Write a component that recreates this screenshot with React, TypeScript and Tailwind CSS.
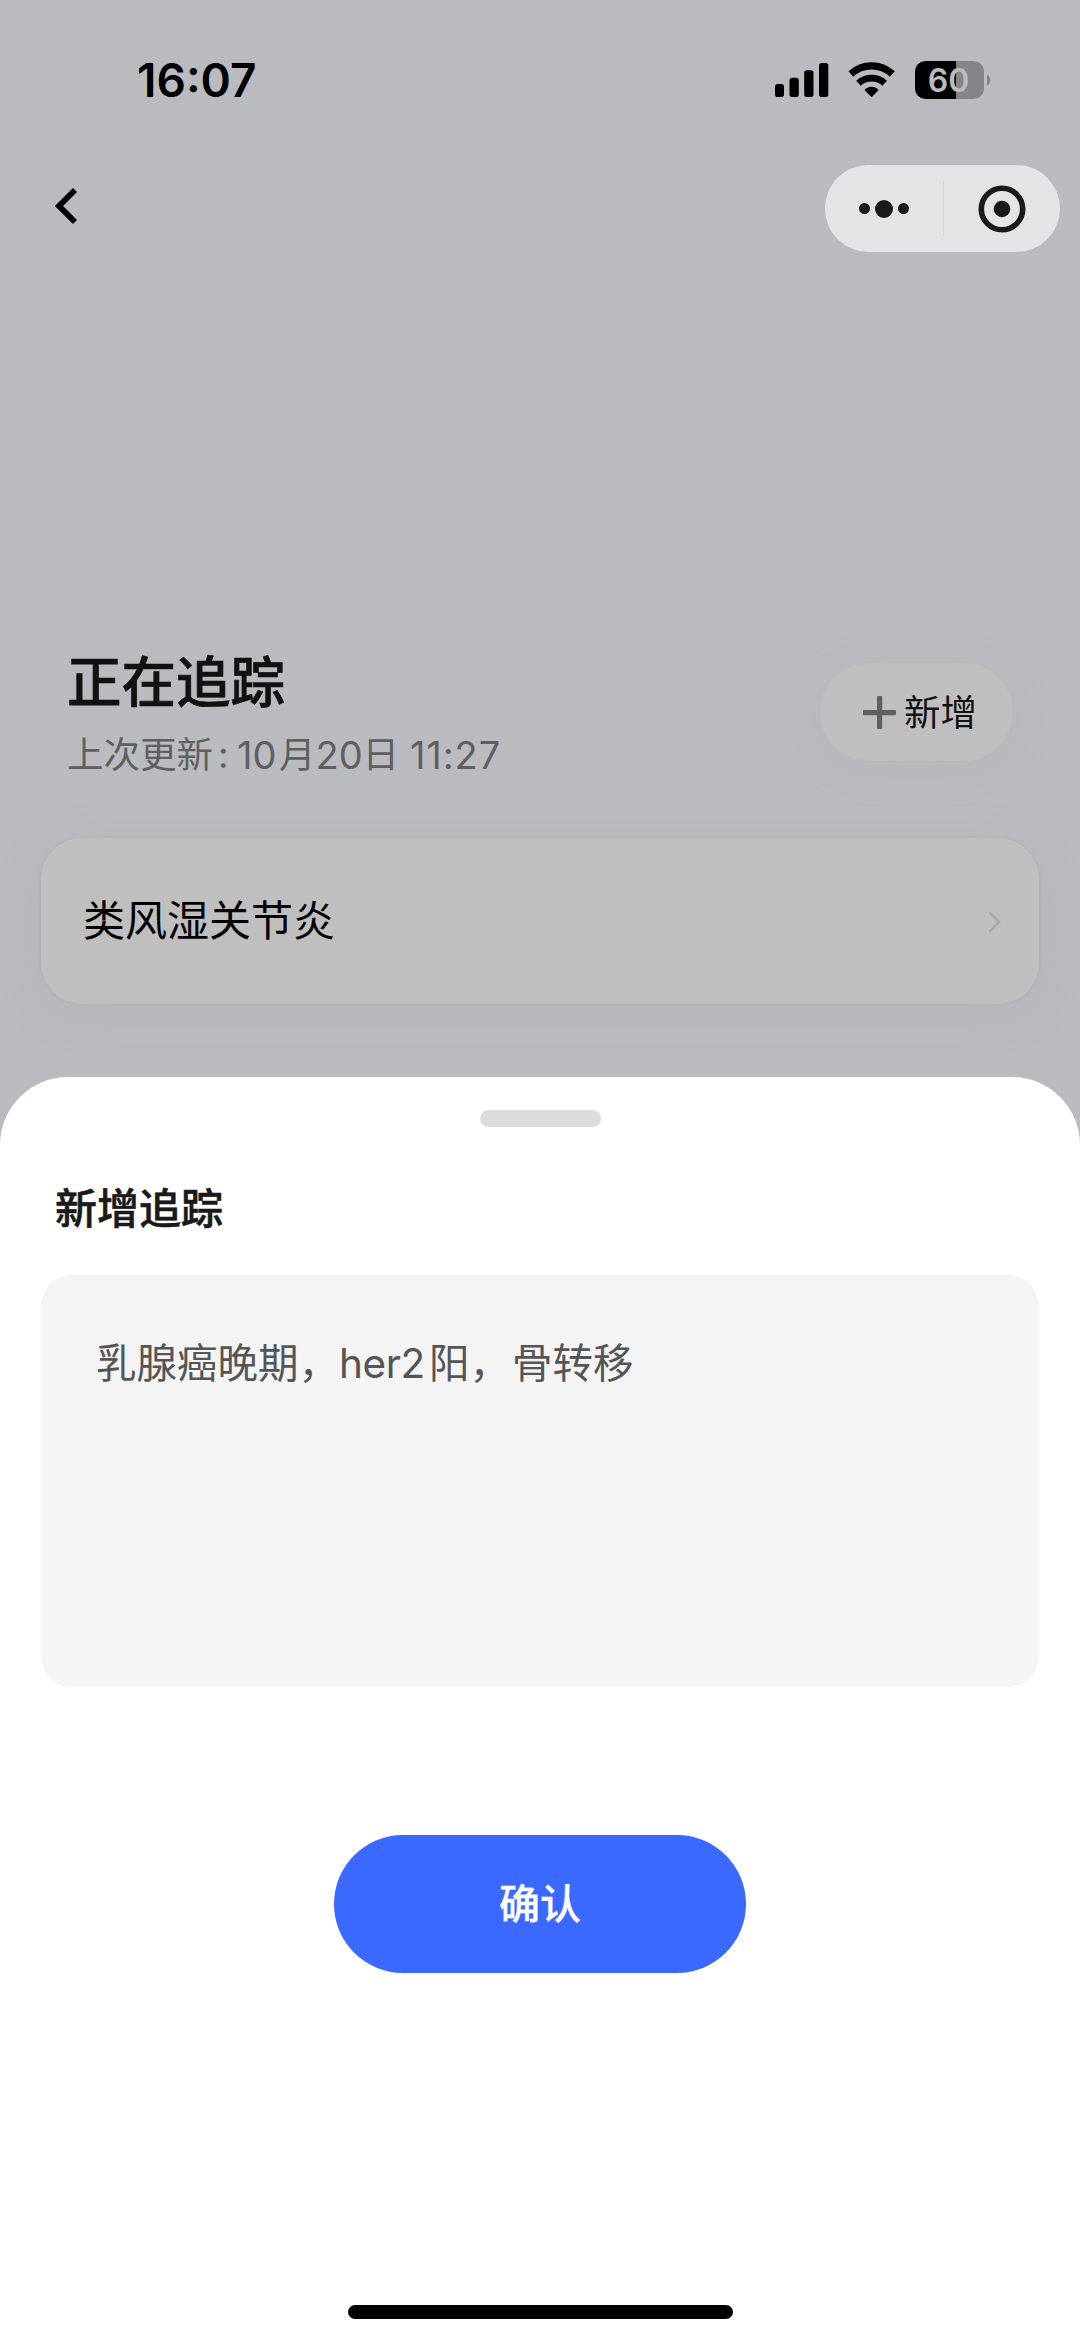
import React from "react";

const cjk = "font-['Inter','Noto_Sans_CJK_SC',sans-serif]";

function StatusIcons() {
  return (
    <svg width="220" height="44" viewBox="772 58 220 44" fill="#000">
      <rect x="775" y="84" width="9" height="13" rx="2.8" />
      <rect x="789.5" y="77.7" width="9.3" height="19.3" rx="2.8" />
      <rect x="804.2" y="70.3" width="9.3" height="26.7" rx="2.8" />
      <rect x="819" y="63" width="9.3" height="34" rx="2.8" />
      <g fill="none" stroke="#000">
        <path d="M850.9 74 A30.5 30.5 0 0 1 892.300 74" strokeWidth="7.2" />
        <path d="M858.500 83.200 A19.500 19.500 0 0 1 884.700 83.200" strokeWidth="6.800" />
      </g>
      <path d="M871.600 97.200 L864.900 90.600 Q864.500 89.600 865.400 89 A10.500 10.500 0 0 1 877.800 89 Q878.700 89.600 878.300 90.600 Z" />
      <path d="M927 61 H956.300 V99 H927 Q915 99 915 87 V73 Q915 61 927 61 Z" />
      <path d="M956.300 61 H972 Q984 61 984 73 V87 Q984 99 972 99 H956.300 Z" fill="#848587" />
      <path d="M987 74.500 Q990.300 76.500 990.300 80 Q990.300 83.500 987 85.500 Z" fill="#848587" />
      <text x="948.500" y="92" textAnchor="middle" fontSize="32" fontWeight="600" fill="#babbbf" className="font-['Inter',sans-serif]">60</text>
    </svg>
  );
}

function Capsule() {
  return (
    <div className="flex h-[87px] w-[235px] items-center rounded-full bg-[#e3e4e6]">
      <div className="flex w-[118px] items-center justify-center gap-[5px]">
        <span className="size-[11px] rounded-full bg-[#1a1a1a]" />
        <span className="size-[18px] rounded-full bg-[#1a1a1a]" />
        <span className="size-[11px] rounded-full bg-[#1a1a1a]" />
      </div>
      <div className="h-[55px] w-px bg-[#d2d3d5]" />
      <div className="flex flex-1 justify-center">
        <svg width="48" height="48" viewBox="0 0 48 48">
          <circle cx="24" cy="24" r="20.700" fill="none" stroke="#1a1a1a" strokeWidth="5.600" />
          <circle cx="24" cy="24" r="8.300" fill="#1a1a1a" />
        </svg>
      </div>
    </div>
  );
}

export default function App() {
  return (
    <div className={`flex h-[2341px] w-[1080px] flex-col overflow-hidden bg-[#babbbf] ${cjk}`}>
      <header className="h-[165px] pt-[58px]">
        <div className="flex h-[44px] items-center justify-between pl-[137px] pr-[88px]">
          <span className="text-[46px] font-semibold leading-[44px] text-black">16:07</span>
          <StatusIcons />
        </div>
      </header>
      <nav className="flex h-[87px] items-start justify-between pl-[52px] pr-[20px]">
        <svg className="mt-[21px]" width="28" height="40" viewBox="52 186 28 40" fill="none" stroke="#000" strokeWidth="5.800">
          <path d="M75 190 L59 206 L75 222" />
        </svg>
        <Capsule />
      </nav>

      <section className="mt-[394px] flex h-[154px] justify-between pl-[67px] pr-[67px]">
        <div>
          <h1 className="h-[72px] text-[54.500px] font-medium leading-[72px] text-[#121212] [-webkit-text-stroke:0.7px_#121212]">正在追踪</h1>
          <p className="mt-[12px] flex h-[50px] text-[36.500px] leading-[50px] text-[#5f5f61]">
            <span>上次更新</span>
            <span className="w-[24px] pl-[5px]">:</span>
            <span className="w-[42px] text-[38px]">10</span>
            <span>月</span>
            <span className="w-[47px] text-[38px]">20</span>
            <span>日</span>
            <span className="ml-[11px] text-[38px] tracking-[0.9px]">11:27</span>
          </p>
        </div>
        <button className="mt-[17px] flex h-[98px] w-[193px] items-center rounded-full border-2 border-[#bebebd] bg-[#bfbfbf] pl-[41px] shadow-[0_8px_40px_rgba(170,160,180,0.2)]">
          <svg width="33" height="33" viewBox="0 0 33 33" fill="#5f5f5f">
            <rect x="14" width="5.200" height="33" rx="1" />
            <rect y="14" width="33" height="5.200" rx="1" />
          </svg>
          <span className="ml-[8px] pt-px text-[36.500px] leading-[44px] text-[#121212]">新增</span>
        </button>
      </section>

      <section className="mx-[41px] mt-[38px] flex h-[166px] items-center justify-between rounded-[41px] bg-[#bfbfbf] pl-[42px] pr-[36px] shadow-[0_8px_40px_rgba(170,160,180,0.25),0_0_3px_rgba(165,165,175,0.6)]">
        <span className="text-[42px] leading-[60px] text-black">类风湿关节炎</span>
        <svg className="mt-[2px]" width="16" height="24" viewBox="0 0 16 24" fill="none" stroke="#a9a9a9" strokeWidth="2.600">
          <path d="M2.500 2.500 L12 12 L2.500 21.500" />
        </svg>
      </section>

      <main className="mt-[73px] flex h-[1264px] flex-col items-center rounded-t-[68px] bg-white pt-[33px]">
        <div className="h-[17px] w-[121px] shrink-0 rounded-full bg-[#dcdcdc]" />
        <h2 className="mt-[52px] h-[60px] w-full pl-[55px] text-[42px] font-medium leading-[60px] text-[#1a1a1a] [-webkit-text-stroke:0.6px_#1a1a1a]">新增追踪</h2>
        <div className="mt-[36px] h-[412px] w-[998px] shrink-0 rounded-[31px] bg-[#f4f4f4] pl-[55px] pt-[59px] text-[40.500px] leading-[60px] text-[#555]">
          <p className="flex whitespace-nowrap">
            <span>乳腺癌晚期，</span>
            <span className="tracking-[-0.4px]">her2</span>
            <span className="ml-[4px]">阳，</span>
            <span className="ml-[2px]">骨转移</span>
          </p>
        </div>
        <button className="mt-[148px] h-[138px] w-[412px] shrink-0 rounded-full bg-[#3b68ff] text-[41px] font-medium leading-[138px] text-white [-webkit-text-stroke:0.3px_#fff]">确认</button>
        <div className="mt-[332px] h-[14px] w-[385px] shrink-0 rounded-full bg-black" />
      </main>
    </div>
  );
}
